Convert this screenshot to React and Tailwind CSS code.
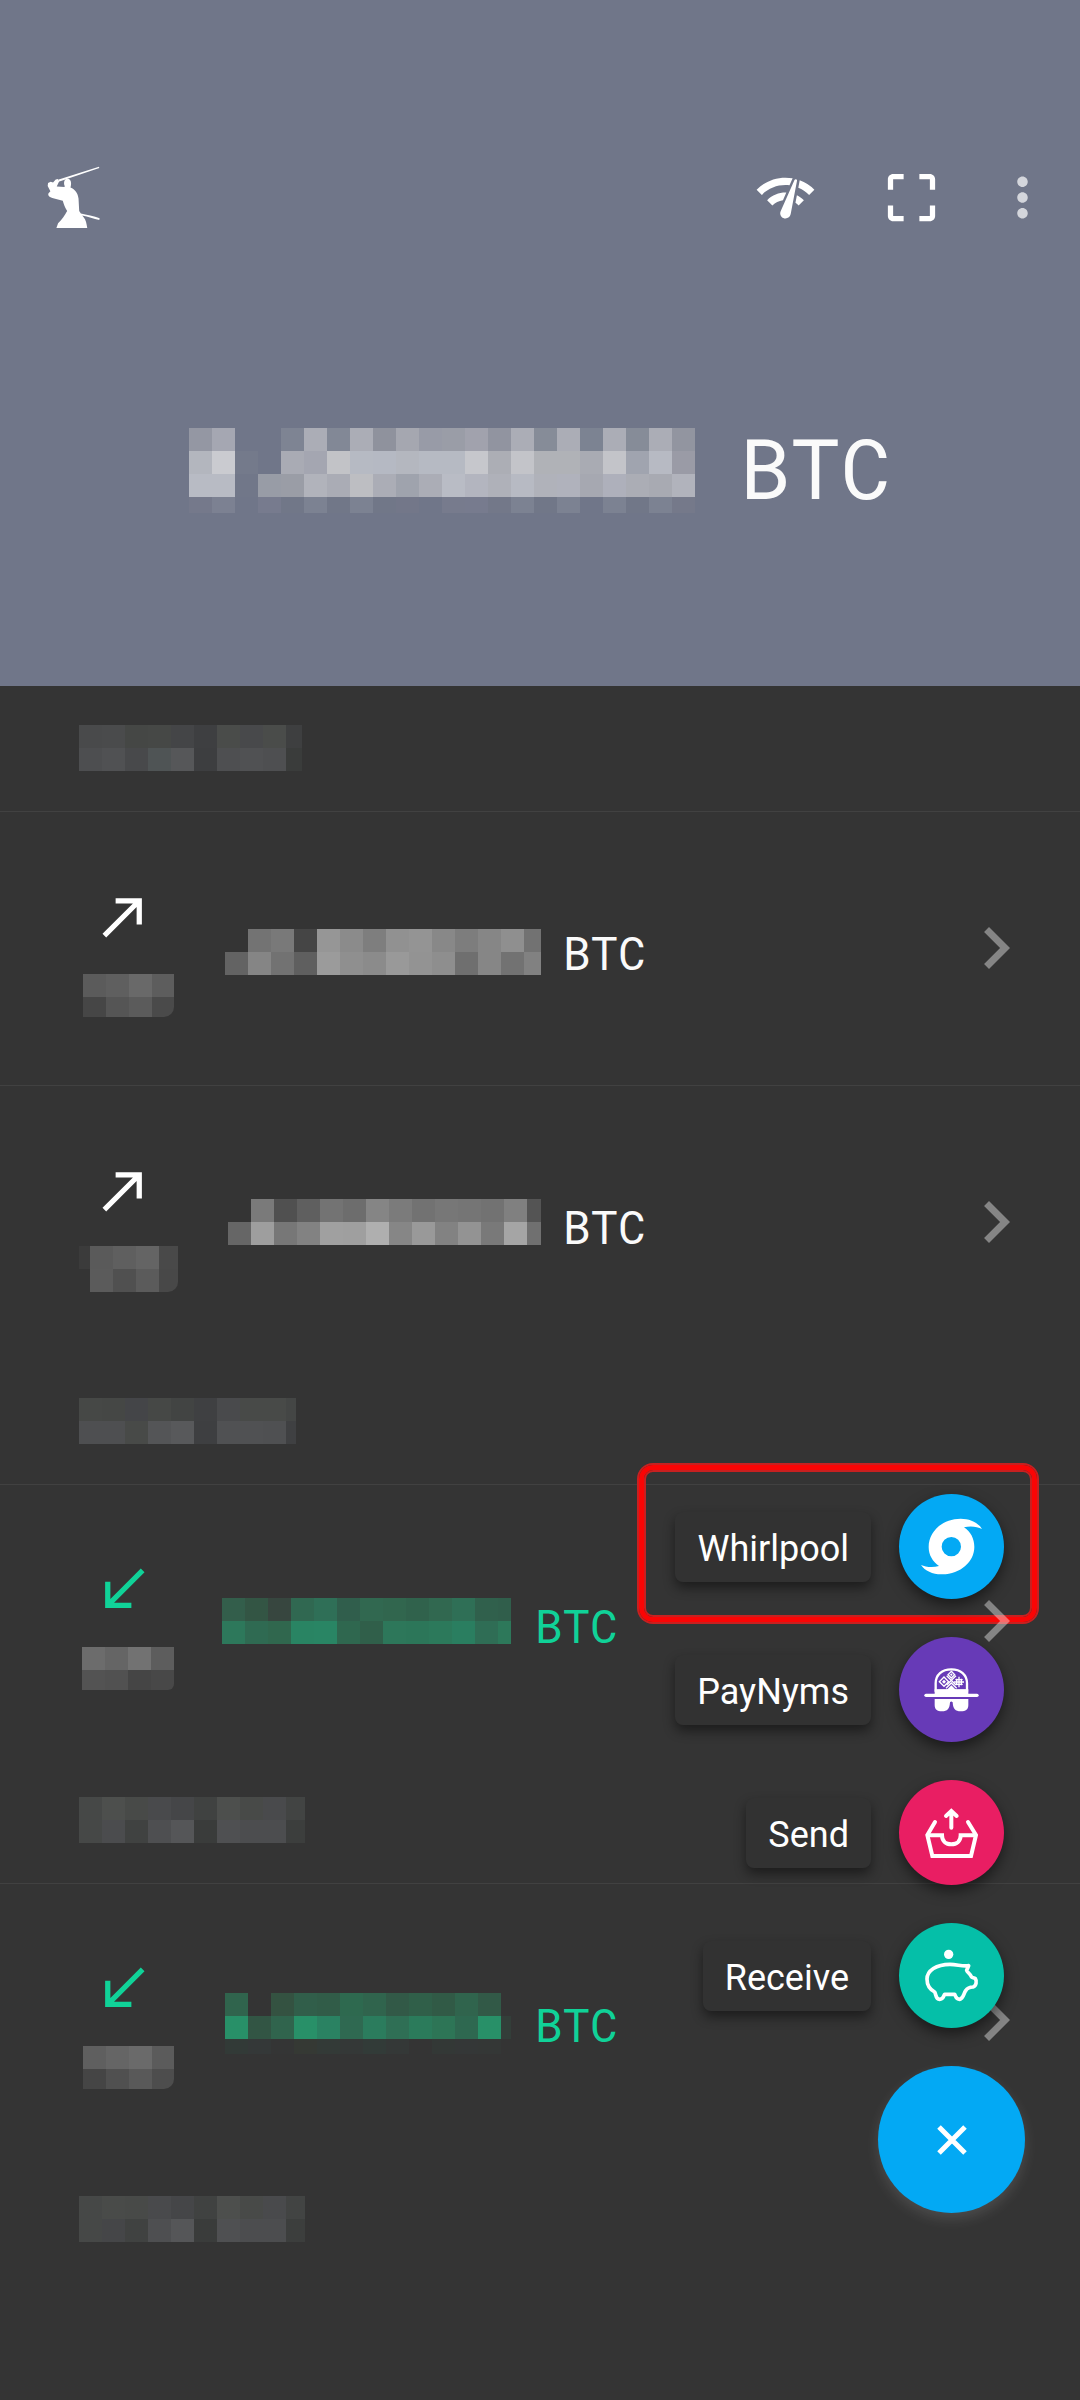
import React from "react";
import {
  MdNetworkCheck,
  MdCropFree,
  MdMoreVert,
  MdCallMade,
  MdCallReceived,
  MdChevronRight,
} from "react-icons/md";

const BALANCE = [
  "9497a3 a5a7b2 - - 7e8493 abadb6 828896 abadb6 8f929d a5a7b0 989ba7 9a9da7 a1a2ad 9194a0 abadb6 868c98 abadb6 7c8392 abadb6 868c98 abadb6 9295a0",
  "b3b6be cacbd0 747a8b - a9abb4 a4a6b1 c2c3c7 b6bac3 b5b9c3 b4b7bf b6bac3 b6bac3 c6c7cc acaeb5 c3c4c9 b0b2b7 b0b2b7 a9abb3 c3c4c9 a0a4af b7bac3 9a9ba6",
  "b8bbc4 b8bbc4 717789 989ca6 9a9da6 b1b3bb aaacb5 bdbec2 abadb6 9fa3ad abadb6 b9bcc5 b3b5bf afb1b9 b7bac3 b0b2ba b0b2bc a6a8b1 aeb0bb abadb5 a8aab2 b1b3bc",
  "75798b 7c8192 - 777b8e 717788 7c8292 717788 7c8292 717788 737789 - 777b8d 777b8e 737889 7c8292 717788 7c8292 - 7c8292 717788 7c8292 75798a",
];

const GROUPS = [
  {
    date: {
      size: "w-[223px] h-[46px]",
      rows: [
        "494a4b 4a4b4c 454745 464846 444547 3e3f41 4a4c4a 48494b 4a4c4a 3e3f40",
        "4d4e50 505153 48494b 4f5455 565759 3d3e40 4e4f51 505153 4e4f51 3a3c3b",
      ],
    },
    items: [
      {
        sent: true,
        time: {
          size: "w-[91px] h-[43px] rounded-br-[10px]",
          rows: ["5b5b5b 5f5f5f 696969 5d5d5d", "464646 555555 5b5b5b 4a4a4a"],
        },
        amount: {
          size: "w-[316px] h-[46px]",
          rows: [
            "- 737373 797979 454545 969696 8b8b8b 7e7e7e 919191 949494 888888 7d7d7d 868686 8f8f8f 727272",
            "636363 858585 727272 5f5f5f 9b9b9b 8f8f8f 8b8b8b 999999 939393 8e8e8e 6f6f6f 868686 727272 818181",
          ],
        },
      },
      {
        sent: true,
        time: {
          size: "w-[99px] h-[46px] rounded-br-[10px]",
          lead: true,
          rows: ["3b3b3b 5a5a5a 5f5f5f 646464 494949", "- 5b5b5b 505050 5b5b5b 484848"],
        },
        amount: {
          size: "w-[313px] h-[46px] mb-2",
          rows: [
            "- 7a7a7a 505050 5f5f5f 737373 6d6d6d 858585 7b7b7b 727272 777777 757575 727272 808080 545454",
            "666666 9e9e9e 777777 828282 a0a0a0 9f9f9f afafaf 868686 999999 828282 939393 797979 a5a5a5 707070",
          ],
        },
      },
    ],
  },
  {
    date: {
      size: "w-[217px] h-[46px]",
      rows: [
        "464846 454745 444548 464846 424443 3f4042 494a4c 484a48 484a48 444645",
        "4e4f51 4e4f51 484a48 545557 58595b 3e3f41 505153 505153 4f5052 3f4042",
      ],
    },
    items: [
      {
        sent: false,
        time: {
          size: "w-[92px] h-[43px] rounded-br-[6px]",
          rows: ["6c6c6c 656565 727272 5d5d5d", "535353 515151 454545 484848"],
        },
        amount: {
          size: "w-[289px] h-[46px] mb-2",
          rows: [
            "335e4b 335544 37463f 306851 2f6f57 305e4c 316850 31664e 30624c 316850 2f6f56 30604c 305e4b",
            "2d785b 2f6a52 30674e 298463 298564 2f674f 305f4a 2d775a 2c7659 2c795b 2a7e60 2f6d55 2d785a",
          ],
        },
      },
    ],
  },
  {
    date: {
      size: "w-[226px] h-[46px]",
      rows: [
        "464847 4d4f4d 484a48 494a4c 454648 404241 4d4f4d 484a48 494a4c 424443",
        "464847 4b4c4e 404241 4e4f51 555658 3a3c3b 4f5052 4c4d4f 4c4d4f 3c3e3d",
      ],
    },
    items: [
      {
        sent: false,
        time: {
          size: "w-[91px] h-[43px] rounded-br-[10px]",
          rows: ["5f5f5f 656565 6a6a6a 5b5b5b", "454545 505050 595959 4d4d4d"],
        },
        amount: {
          size: "w-[286px] h-[61px]",
          rows: [
            "30644d - 345241 315e4a 315c48 2e694f 30644d 325947 305f49 315a46 30644d 325947",
            "289068 325544 30644d 289068 2a8262 2f6951 2b7c5d 2f6f55 2b7b5b 2d7556 2e6850 289068 333e39",
            "323a37 343838 343535 353934 333a37 343837 323b38 343837 343434 333836 343737 343736",
          ],
        },
      },
    ],
  },
  {
    date: {
      size: "w-[226px] h-[46px]",
      rows: [
        "464847 494b49 484a48 494a4c 454648 404241 4d4f4d 484a48 494a4c 424443",
        "464847 454648 404241 4e4f51 555658 3a3c3b 4f5052 4c4d4f 4c4d4f 3c3e3d",
      ],
    },
    items: [],
  },
];

function Mosaic({ rows, size, lead, label }) {
  return (
    <div role="img" aria-label={label} className={"flex shrink-0 flex-col overflow-hidden " + size}>
      {rows.map((row, r) => (
        <div key={r} className="flex h-[23px] shrink-0">
          {row.split(" ").map((c, i) => (
            <span
              key={i}
              className={lead && i === 0 ? "h-[23px] w-[11px] shrink-0" : "h-[23px] w-[23px] shrink-0"}
              style={c === "-" ? undefined : { backgroundColor: "#" + c }}
            />
          ))}
        </div>
      ))}
    </div>
  );
}

function Samurai() {
  return (
    <svg viewBox="48 48 164 188" className="h-[63px] w-[55px]" fill="#fff" aria-hidden="true">
      <path d="M206 50 L86 88 L84 94 L88 94 L207 54 Z" />
      <path d="M54 99 L62 95 L69 97 L77 88 L84 87 L87 94 L80 109 L103 111 L104 108 C100 101 101 86 112 86 C123 86 125 100 121 112 C135 118 143 129 145 145 L147 182 L152 190 C168 194 192 198 208 204 L207 209 C190 207 174 199 156 196 C163 203 168 213 169 222 L171 233 H79 L84 219 C95 208 104 195 111 182 C104 172 101 162 98 152 L75 146 C60 142 53 138 55 130 L61 123 L53 108 Z" />
    </svg>
  );
}

function WhirlpoolIcon() {
  return (
    <svg viewBox="807 131 315 315" className="size-full" aria-hidden="true">
      <path
        fill="#fff"
        fillRule="evenodd"
        d="M1056 236 C1045 217 1020 205 992 205 C935 206 896 245 896 290 C896 314 908 334 927 347 C908 353 886 350 873 344 C885 362 910 373 937 372 C992 371 1033 334 1033 290 C1033 265 1022 244 1002 231 C1022 226 1042 229 1056 236 Z M964 260 A29 29 0 1 1 964 318 A29 29 0 1 1 964 260 Z"
      />
    </svg>
  );
}

function PayNymsIcon() {
  return (
    <svg viewBox="807 561 315 315" className="size-full" fill="none" stroke="#fff" aria-hidden="true">
      <path strokeWidth="7" d="M917 722 V700 C917 674 936 658 964 658 C992 658 1011 674 1011 700 V722 Z" />
      <g strokeWidth="4">
        <path d="M964 664 L974 674 L964 684 L954 674 Z" />
        <path d="M942 681 L956 695 L942 709 L928 695 Z" />
        <path d="M950 677 L978 705 M978 677 L950 705 M948 715 L964 699 L980 715" />
        <path d="M987 680 V712 M980 686 V706 M994 686 V706 M972 696 H1002 M976 689 H998 M976 703 H998" />
      </g>
      <path fill="#fff" stroke="none" d="M942 689 L948 695 L942 701 L936 695 Z M964 706 L978 720 H950 Z M964 670 L968 674 L964 678 L960 674 Z" />
      <path strokeWidth="10" strokeLinecap="round" d="M888 736 H1041" />
      <path
        fill="#fff"
        stroke="none"
        d="M914 747 H1015 V765 C1015 778 1008 784 992 784 C976 784 969 777 968 757 Q964 752 960 757 C959 777 952 784 936 784 C921 784 914 778 914 765 Z"
      />
      <path fill="#fff" stroke="none" d="M914 718 H1015 V732 H914 Z" />
    </svg>
  );
}

function SendIcon() {
  return (
    <svg
      viewBox="717 90 315 315"
      className="size-full"
      fill="none"
      stroke="#fff"
      strokeWidth="12"
      strokeLinecap="round"
      aria-hidden="true"
    >
      <path d="M874 184 V233 M858 198 L874 183 L890 198" />
      <path d="M825 216 L802 255 L817 318 H933 L948 255 L924 216" />
      <path d="M804 256 H846 C846 273 858 283 874 283 C890 283 902 273 902 256 H946" />
    </svg>
  );
}

function ReceiveIcon() {
  return (
    <svg
      viewBox="717 519 315 315"
      className="size-full"
      fill="none"
      stroke="#fff"
      strokeWidth="11"
      strokeLinejoin="round"
      aria-hidden="true"
    >
      <circle cx="866" cy="613" r="14" fill="#fff" stroke="none" />
      <path d="M870 643 C829 643 801 662 801 687 C801 705 811 719 824 726 C829 734 826 747 839 748 C850 748 850 739 854 733 H884 C888 739 887 748 899 748 C911 746 910 732 917 722 C922 714 930 711 939 711 C949 708 951 693 946 686 C942 682 936 684 934 680 C931 671 923 669 920 661 L926 647 C905 650 893 643 870 643 Z" />
    </svg>
  );
}

const ACTIONS = [
  { label: "Whirlpool", color: "bg-[#03a9f4]", Icon: WhirlpoolIcon, marked: true },
  { label: "PayNyms", color: "bg-[#673ab7]", Icon: PayNymsIcon },
  { label: "Send", color: "bg-[#e91e63]", Icon: SendIcon },
  { label: "Receive", color: "bg-[#05bfa8]", Icon: ReceiveIcon },
];

function Transaction({ sent, time, amount }) {
  const Arrow = sent ? MdCallMade : MdCallReceived;
  return (
    <li className="flex min-h-[274px] items-start border-t border-[#414141] pr-[42px] pl-[78px]">
      <div className="w-[100px] pt-[73px]">
        <Arrow className={sent ? "ml-[14px] size-[63px] text-white" : "ml-[14px] size-[63px] text-[#10d298]"} />
        <div className="mt-6 flex h-[46px] items-center justify-center">
          <Mosaic {...time} label="Hidden time" />
        </div>
      </div>
      <div className={sent ? "ml-10 flex h-[273px] flex-1 items-center gap-[22px] pt-[6px]" : "ml-10 flex h-[273px] flex-1 items-center gap-6 pt-[6px]"}>
        <div className={sent ? "flex w-[323px] justify-end" : "flex w-[293px] justify-end"}>
          <Mosaic {...amount} label="Hidden amount" />
        </div>
        <span className={sent ? "text-[46px] leading-[56px] text-[#fafafa]" : "text-[46px] leading-[56px] text-[#10d298]"}>
          BTC
        </span>
      </div>
      <button type="button" aria-label="Open transaction" className="relative z-10 mt-[94px] text-white/40">
        <MdChevronRight className="size-[84px]" />
      </button>
    </li>
  );
}

export default function App() {
  return (
    <div className="relative min-h-screen bg-[#343434] font-['Roboto_Mono',Roboto,sans-serif]">
      <header className="bg-[#707689] pt-[164px] pb-[160px]">
        <div className="flex h-[66px] items-center pr-[26px] pl-[46px]">
          <button type="button" aria-label="Account">
            <Samurai />
          </button>
          <div className="ml-auto flex items-center text-white">
            <button type="button" aria-label="Network status">
              <MdNetworkCheck className="size-[63px]" />
            </button>
            <button type="button" aria-label="Scan code" className="ml-[63px]">
              <MdCropFree className="size-[63px]" />
            </button>
            <button type="button" aria-label="More options" className="ml-12 text-white/70">
              <MdMoreVert className="size-[63px]" />
            </button>
          </div>
        </div>
        <div className="mt-[184px] flex items-center justify-center gap-[45px]">
          <Mosaic rows={BALANCE} size="w-[506px] h-[85px]" label="Hidden balance" />
          <span className="pb-[6px] text-[84px] leading-[106px] text-[#fafafa]">BTC</span>
        </div>
      </header>

      <main>
        {GROUPS.map((g, i) => (
          <section key={i}>
            <div className="h-[125px] pt-[39px] pl-[79px]">
              <Mosaic {...g.date} label="Hidden date" />
            </div>
            <ul>
              {g.items.map((t, j) => (
                <Transaction key={j} {...t} />
              ))}
            </ul>
          </section>
        ))}
      </main>

      <div className="absolute right-[55px] bottom-[187px] flex flex-col items-end font-[Roboto,sans-serif]">
        {ACTIONS.map(({ label, color, Icon, marked }) => (
          <div key={label} className="relative mr-[21px] mb-[38px] flex items-center gap-7">
            {marked && (
              <div className="absolute -top-[29px] -right-[33px] -bottom-[23px] -left-9 rounded-[14px] border-[5px] border-[#fa0505] shadow-[0_0_0_2px_#c82020,inset_0_0_0_2px_#c82020]" />
            )}
            <span
              id={"action-" + label}
              className="relative z-20 rounded-[8px] bg-[#323232] px-[22px] pt-4 pb-3 text-[36px] leading-[42px] text-white shadow-[0_6px_12px_rgba(0,0,0,0.45)]"
            >
              {label}
            </span>
            <button
              type="button"
              aria-labelledby={"action-" + label}
              className={"relative z-20 size-[105px] rounded-full shadow-[0_6px_14px_rgba(0,0,0,0.5)] " + color}
            >
              <Icon />
            </button>
          </div>
        ))}
        <button
          type="button"
          aria-label="Close menu"
          className="relative z-20 flex size-[147px] items-center justify-center rounded-full bg-[#03a9f4] shadow-[0_6px_14px_rgba(255,255,255,0.12)]"
        >
          <svg viewBox="0 0 30 30" className="size-[30px]" stroke="#fff" strokeWidth="5" aria-hidden="true">
            <path d="M2 2 L28 28 M28 2 L2 28" />
          </svg>
        </button>
      </div>
    </div>
  );
}
